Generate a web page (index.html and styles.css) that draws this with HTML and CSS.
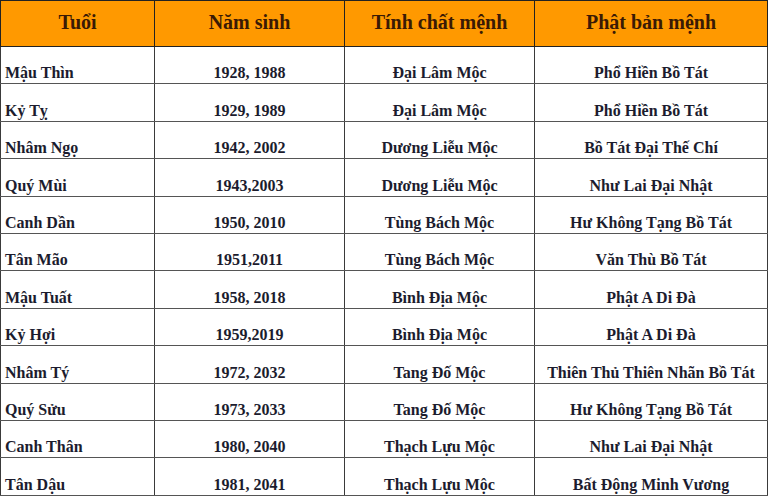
FILE: index.html
```html
<!DOCTYPE html>
<html lang="vi">
<head>
<meta charset="utf-8">
<link rel="stylesheet" href="styles.css">
</head>
<body>
<table class="menh">
  <colgroup>
    <col class="c1"><col class="c2"><col class="c3"><col class="c4">
  </colgroup>
  <thead>
    <tr><th>Tuổi</th><th>Năm sinh</th><th>Tính chất mệnh</th><th>Phật bản mệnh</th></tr>
  </thead>
  <tbody>
    <tr><td>Mậu Thìn</td><td>1928, 1988</td><td>Đại Lâm Mộc</td><td>Phổ Hiền Bồ Tát</td></tr>
    <tr><td>Kỷ Tỵ</td><td>1929, 1989</td><td>Đại Lâm Mộc</td><td>Phổ Hiền Bồ Tát</td></tr>
    <tr><td>Nhâm Ngọ</td><td>1942, 2002</td><td>Dương Liễu Mộc</td><td>Bồ Tát Đại Thế Chí</td></tr>
    <tr><td>Quý Mùi</td><td>1943,2003</td><td>Dương Liễu Mộc</td><td>Như Lai Đại Nhật</td></tr>
    <tr><td>Canh Dần</td><td>1950, 2010</td><td>Tùng Bách Mộc</td><td>Hư Không Tạng Bồ Tát</td></tr>
    <tr><td>Tân Mão</td><td>1951,2011</td><td>Tùng Bách Mộc</td><td>Văn Thù Bồ Tát</td></tr>
    <tr><td>Mậu Tuất</td><td>1958, 2018</td><td>Bình Địa Mộc</td><td>Phật A Di Đà</td></tr>
    <tr><td>Kỷ Hợi</td><td>1959,2019</td><td>Bình Địa Mộc</td><td>Phật A Di Đà</td></tr>
    <tr><td>Nhâm Tý</td><td>1972, 2032</td><td>Tang Đố Mộc</td><td>Thiên Thủ Thiên Nhãn Bồ Tát</td></tr>
    <tr><td>Quý Sửu</td><td>1973, 2033</td><td>Tang Đố Mộc</td><td>Hư Không Tạng Bồ Tát</td></tr>
    <tr><td>Canh Thân</td><td>1980, 2040</td><td>Thạch Lựu Mộc</td><td>Như Lai Đại Nhật</td></tr>
    <tr><td>Tân Dậu</td><td>1981, 2041</td><td>Thạch Lựu Mộc</td><td>Bất Động Minh Vương</td></tr>
  </tbody>
</table>
</body>
</html>
```
FILE: styles.css
```css
html, body {
  margin: 0;
  padding: 0;
  background: #ffffff;
}

.menh {
  border-collapse: collapse;
  table-layout: fixed;
  width: 767px;
  font-family: "Liberation Serif", "Times New Roman", serif;
  font-weight: bold;
}

.c1 { width: 154px; }
.c2 { width: 190px; }
.c3 { width: 190px; }
.c4 { width: 233px; }

.menh th {
  background: #ff9900;
  color: #3a1a05;
  font-size: 20px;
  height: 43px;
  padding: 0 2px 2px;
  border: 1px solid #222;
  text-align: center;
  vertical-align: middle;
}

.menh td {
  height: 35.4px;
  padding: 0 4px 1px;
  border: 1px solid #3a3a3a;
  border-top-color: #555;
  border-bottom-color: #555;
  font-size: 16px;
  color: #1c1c2e;
  text-align: center;
  vertical-align: bottom;
  white-space: nowrap;
  line-height: 19px;
}

.menh td:first-child {
  text-align: left;
}
```
